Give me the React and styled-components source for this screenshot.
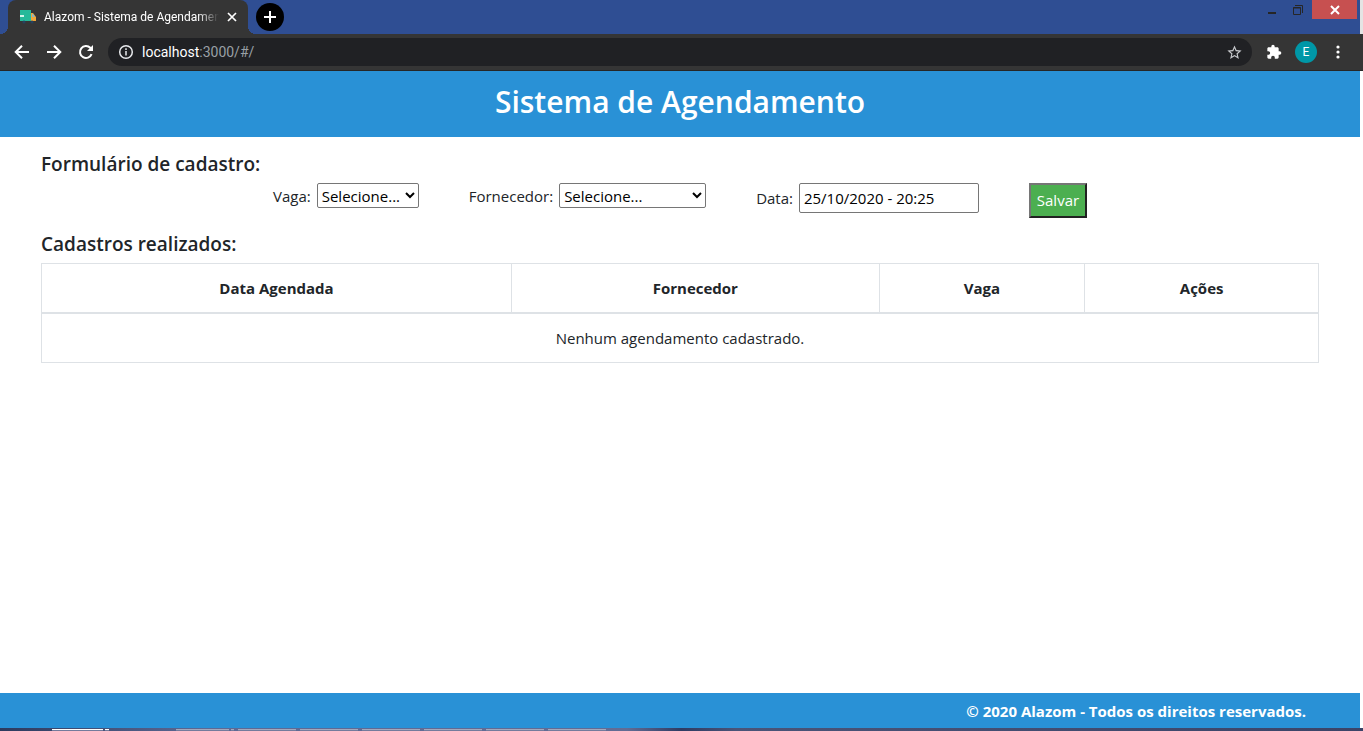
import React, { useState } from "react";
import styled, { createGlobalStyle } from "styled-components";

const BLUE = "#2991d6";

const GlobalStyle = createGlobalStyle`
  *, *::before, *::after { box-sizing: border-box; }
  html { background: #fff; }
  body { margin: 0; font: 400 15px/24px "Open Sans", "Noto Sans", sans-serif; color: #212529; }
  h1, h2 { margin: 0; font-weight: 600; }
  button, input, select { font-family: inherit; }
  svg { flex: none; }
`;

const Window = styled.div`
  min-height: 100vh;
  display: flex;
  flex-direction: column;
`;

const TabStrip = styled.div`
  height: 34px;
  display: flex;
  align-items: flex-start;
  padding-left: 8px;
  background: #2f4e93;
  border-right: 3px solid #e4e4e4;
  font-family: Roboto, sans-serif;
`;

const Tab = styled.div`
  position: relative;
  width: 240px;
  height: 34px;
  display: flex;
  align-items: center;
  gap: 8px;
  padding: 0 11px 0 12px;
  background: #353535;
  border-radius: 8px 8px 0 0;
  &::before, &::after {
    content: "";
    position: absolute;
    bottom: 0;
    width: 8px;
    height: 8px;
  }
  &::before { right: 100%; background: radial-gradient(circle at 0 0, transparent 8px, #353535 8px); }
  &::after { left: 100%; background: radial-gradient(circle at 100% 0, transparent 8px, #353535 8px); }
`;

const TabTitle = styled.span`
  flex: 1;
  min-width: 0;
  white-space: nowrap;
  font-size: 12px;
  color: #fff;
  mask-image: linear-gradient(to right, #000 88%, transparent);
`;

const IconButton = styled.button`
  flex: none;
  width: ${(p) => p.$size || 16}px;
  height: ${(p) => p.$size || 16}px;
  display: flex;
  align-items: center;
  justify-content: center;
  padding: 0;
  border: 0;
  border-radius: 50%;
  background: ${(p) => p.$bg || "transparent"};
  color: #fff;
  font-size: 12px;
  svg { display: block; }
`;

const NewTab = styled(IconButton)`
  margin: 3px 0 0 8px;
`;

const Avatar = styled(IconButton)`
  margin: 0 -3px;
`;

const WindowControls = styled.div`
  margin-left: auto;
  display: flex;
  padding-right: 3px;
`;

const WindowButton = styled.button`
  width: ${(p) => (p.$close ? 45 : 26)}px;
  height: 19px;
  padding: 0;
  border: 0;
  display: flex;
  align-items: center;
  justify-content: center;
  background: ${(p) => (p.$close ? "#c75050" : "transparent")};
  &:nth-last-child(2) { margin-right: 1px; }
`;

const Toolbar = styled.div`
  height: 37px;
  display: flex;
  align-items: center;
  gap: 16px;
  padding: 0 17px 0 14px;
  background: #353535;
  border-bottom: 1px solid #262626;
  font-family: Roboto, sans-serif;
`;

const AddressBar = styled.div`
  flex: 1;
  height: 28px;
  display: flex;
  align-items: center;
  gap: 8px;
  padding: 0 9px 0 10px;
  margin: 0 -2px;
  border-radius: 14px;
  background: #202124;
`;

const Address = styled.div`
  flex: 1;
  font-size: 14px;
  color: #9aa0a6;
  b { font-weight: 400; color: #fff; }
`;

const Page = styled.div`
  flex: 1;
  display: flex;
  flex-direction: column;
  margin-right: 3px;
`;

const Header = styled.header`
  height: 66px;
  padding-top: 11px;
  background: ${BLUE};
  color: #fff;
  text-align: center;
  h1 { font-size: 30px; line-height: 40px; }
`;

const Main = styled.main`
  flex: 1;
  padding: 15px 41px;
`;

const SectionTitle = styled.h2`
  font-size: 19px;
  line-height: 24px;
  margin-bottom: 7px;
`;

const Form = styled.form`
  display: flex;
  justify-content: center;
  align-items: flex-start;
  gap: 50px;
  margin-bottom: 14px;
`;

const Field = styled.label`
  display: flex;
  align-items: center;
  gap: 6px;
`;

const Select = styled.select`
  width: ${(p) => p.$width}px;
  height: 25px;
  padding: 0;
  font-size: 15px;
  color: #000;
  background: #fff;
  border: 1px solid #767676;
  border-radius: 2px;
`;

const DateInput = styled.input`
  width: 180px;
  height: 30px;
  padding: 1px 4px;
  font-size: 15px;
  color: #000;
  background: #fff;
  border: 1px solid #767676;
  border-radius: 2px;
`;

const SaveButton = styled.button`
  width: 58px;
  height: 35px;
  padding: 0 0 2px;
  font-size: 15px;
  color: #fff;
  background: #4caf50;
  border: 2px solid;
  border-color: #767676 #212121 #212121 #767676;
`;

const Table = styled.table`
  width: 100%;
  table-layout: fixed;
  border-collapse: collapse;
  text-align: center;
  border: 1px solid #dee2e6;
  th, td { padding: 0 12px; border: 1px solid #dee2e6; }
  th { height: 49px; font-weight: 700; border-bottom-width: 2px; }
  td { height: 50px; }
`;

const Footer = styled.footer`
  height: 35px;
  padding: 6px 54px 0;
  background: ${BLUE};
  color: #fff;
  font-weight: 700;
  text-align: right;
`;

const Taskbar = styled.div`
  height: 3px;
  display: flex;
  gap: 2px;
  padding-left: 52px;
  background: linear-gradient(90deg, #2c3a5e, #5d6994 15%, #626c94 46%, #2e3b63 50%, #4a5478 54%, #3b4468);
`;

const TaskItem = styled.span`
  width: ${(p) => p.$width}px;
  margin-top: 1px;
  margin-left: ${(p) => p.$gap || 0}px;
  background: #747b9c;
  border-top: 1px solid ${(p) => (p.$active ? "#fff" : "#a3a8bd")};
`;

const stroke = { fill: "none", stroke: "currentColor", strokeWidth: 2 };

const Truck = () => (
  <svg width="16" height="16" viewBox="0 0 16 16">
    <path d="M0 1h11v11H0z" fill="#26b99a" />
    <path d="M0 6h4v2H0z" fill="#d5f4ec" />
    <path d="M11 4h2l3 4v4h-5z" fill="#f0a73a" />
    <path d="M12 5h1l2 3h-3z" fill="#8cb4c4" />
    <circle cx="4" cy="13" r="1.6" fill="#27415e" />
    <circle cx="12" cy="13" r="1.6" fill="#27415e" />
  </svg>
);

const Arrow = ({ forward }) => (
  <svg width="16" height="16" viewBox="0 0 16 16" {...stroke}>
    <path d={forward ? "M1 8h13M8 1.7L14.3 8 8 14.3" : "M15 8H2M8 1.7L1.7 8 8 14.3"} />
  </svg>
);

const Reload = () => (
  <svg width="16" height="16" viewBox="0 0 16 16">
    <path d="M13.6 10.2A6 6 0 1 1 12.3 3.8L14 5.5" {...stroke} />
    <path d="M15 1v6H9z" fill="currentColor" />
  </svg>
);

const Cross = ({ width = 2 }) => (
  <svg width="10" height="10" viewBox="0 0 10 10">
    <path d="M1 1l8 8M9 1l-8 8" stroke="#fff" strokeWidth={width} />
  </svg>
);

const Info = () => (
  <svg width="16" height="16" viewBox="0 0 16 16" fill="none" stroke="#e8eaed" strokeWidth="1.5">
    <circle cx="8" cy="8" r="6.3" />
    <path d="M8 7v4.5M8 4.3v1.6" />
  </svg>
);

const Star = () => (
  <svg width="17" height="17" viewBox="0 0 24 24" fill="#c8cacd">
    <path d="M22 9.24l-7.19-.62L12 2 9.19 8.63 2 9.24l5.46 4.73L5.82 21 12 17.27 18.18 21l-1.63-7.03L22 9.24zM12 15.4l-3.76 2.27 1-4.28-3.32-2.88 4.38-.38L12 6.1l1.71 4.04 4.38.38-3.32 2.88 1 4.28L12 15.4z" />
  </svg>
);

const Puzzle = () => (
  <svg width="16" height="16" viewBox="0 0 24 24" fill="#fff">
    <path d="M20.5 11H19V7c0-1.1-.9-2-2-2h-4V3.5a2.5 2.5 0 0 0-5 0V5H4c-1.1 0-1.99.9-1.99 2v3.8H3.5c1.49 0 2.7 1.21 2.7 2.7s-1.21 2.7-2.7 2.7H2V20c0 1.1.9 2 2 2h3.8v-1.5c0-1.49 1.21-2.7 2.7-2.7s2.7 1.21 2.7 2.7V22H17c1.1 0 2-.9 2-2v-4h1.5a2.5 2.5 0 0 0 0-5z" />
  </svg>
);

const Dots = () => (
  <svg width="16" height="16" viewBox="0 0 16 16" fill="#fff">
    <circle cx="8" cy="3" r="1.6" />
    <circle cx="8" cy="8" r="1.6" />
    <circle cx="8" cy="13" r="1.6" />
  </svg>
);

const columns = [
  ["Data Agendada", "36.8%"],
  ["Fornecedor", "28.8%"],
  ["Vaga", "16.1%"],
  ["Ações", "18.3%"],
];

const taskItems = [58, 58, 58, 58, 58, 58];

export default function App() {
  const [date, setDate] = useState("25/10/2020 - 20:25");
  return (
    <Window>
      <GlobalStyle />
      <TabStrip>
        <Tab>
          <Truck />
          <TabTitle>Alazom - Sistema de Agendamen</TabTitle>
          <IconButton aria-label="Fechar guia" $size={10}><Cross width={1.7} /></IconButton>
        </Tab>
        <NewTab aria-label="Nova guia" $size={28} $bg="#000">
          <svg width="12" height="12" viewBox="0 0 12 12" {...stroke}><path d="M6 0v12M0 6h12" /></svg>
        </NewTab>
        <WindowControls>
          <WindowButton aria-label="Minimizar">
            <svg width="10" height="10"><path d="M1 7h8v2H1z" fill="#262626" /></svg>
          </WindowButton>
          <WindowButton aria-label="Restaurar">
            <svg width="12" height="12" viewBox="0 0 12 12" fill="none" stroke="#262626">
              <path d="M1.5 3.5h7v7h-7zM1 4h8M3 1.5h7.5V9" />
            </svg>
          </WindowButton>
          <WindowButton aria-label="Fechar" $close><Cross /></WindowButton>
        </WindowControls>
      </TabStrip>
      <Toolbar>
        <IconButton aria-label="Voltar"><Arrow /></IconButton>
        <IconButton aria-label="Avançar"><Arrow forward /></IconButton>
        <IconButton aria-label="Recarregar"><Reload /></IconButton>
        <AddressBar>
          <Info />
          <Address><b>localhost</b>:3000/#/</Address>
          <IconButton aria-label="Favoritar" $size={18}><Star /></IconButton>
        </AddressBar>
        <IconButton aria-label="Extensões"><Puzzle /></IconButton>
        <Avatar aria-label="Perfil" $size={22} $bg="#0097a7">E</Avatar>
        <IconButton aria-label="Menu"><Dots /></IconButton>
      </Toolbar>
      <Page>
        <Header><h1>Sistema de Agendamento</h1></Header>
        <Main>
          <SectionTitle>Formulário de cadastro:</SectionTitle>
          <Form onSubmit={(e) => e.preventDefault()}>
            <Field>
              Vaga:
              <Select $width={102}><option>Selecione...</option></Select>
            </Field>
            <Field>
              Fornecedor:
              <Select $width={147}><option>Selecione...</option></Select>
            </Field>
            <Field>
              Data:
              <DateInput value={date} onChange={(e) => setDate(e.target.value)} />
            </Field>
            <SaveButton type="submit">Salvar</SaveButton>
          </Form>
          <SectionTitle>Cadastros realizados:</SectionTitle>
          <Table>
            <colgroup>
              {columns.map(([name, width]) => <col key={name} width={width} />)}
            </colgroup>
            <thead>
              <tr>{columns.map(([name]) => <th key={name} scope="col">{name}</th>)}</tr>
            </thead>
            <tbody>
              <tr><td colSpan={4}>Nenhum agendamento cadastrado.</td></tr>
            </tbody>
          </Table>
        </Main>
        <Footer>© 2020 Alazom - Todos os direitos reservados.</Footer>
      </Page>
      <Taskbar>
        <TaskItem $width={51} $active />
        <TaskItem $width={4} $active />
        <TaskItem $width={53} $gap={65} />
        <TaskItem $width={3} />
        {taskItems.map((width, i) => <TaskItem key={i} $width={width} $gap={2} />)}
      </Taskbar>
    </Window>
  );
}
